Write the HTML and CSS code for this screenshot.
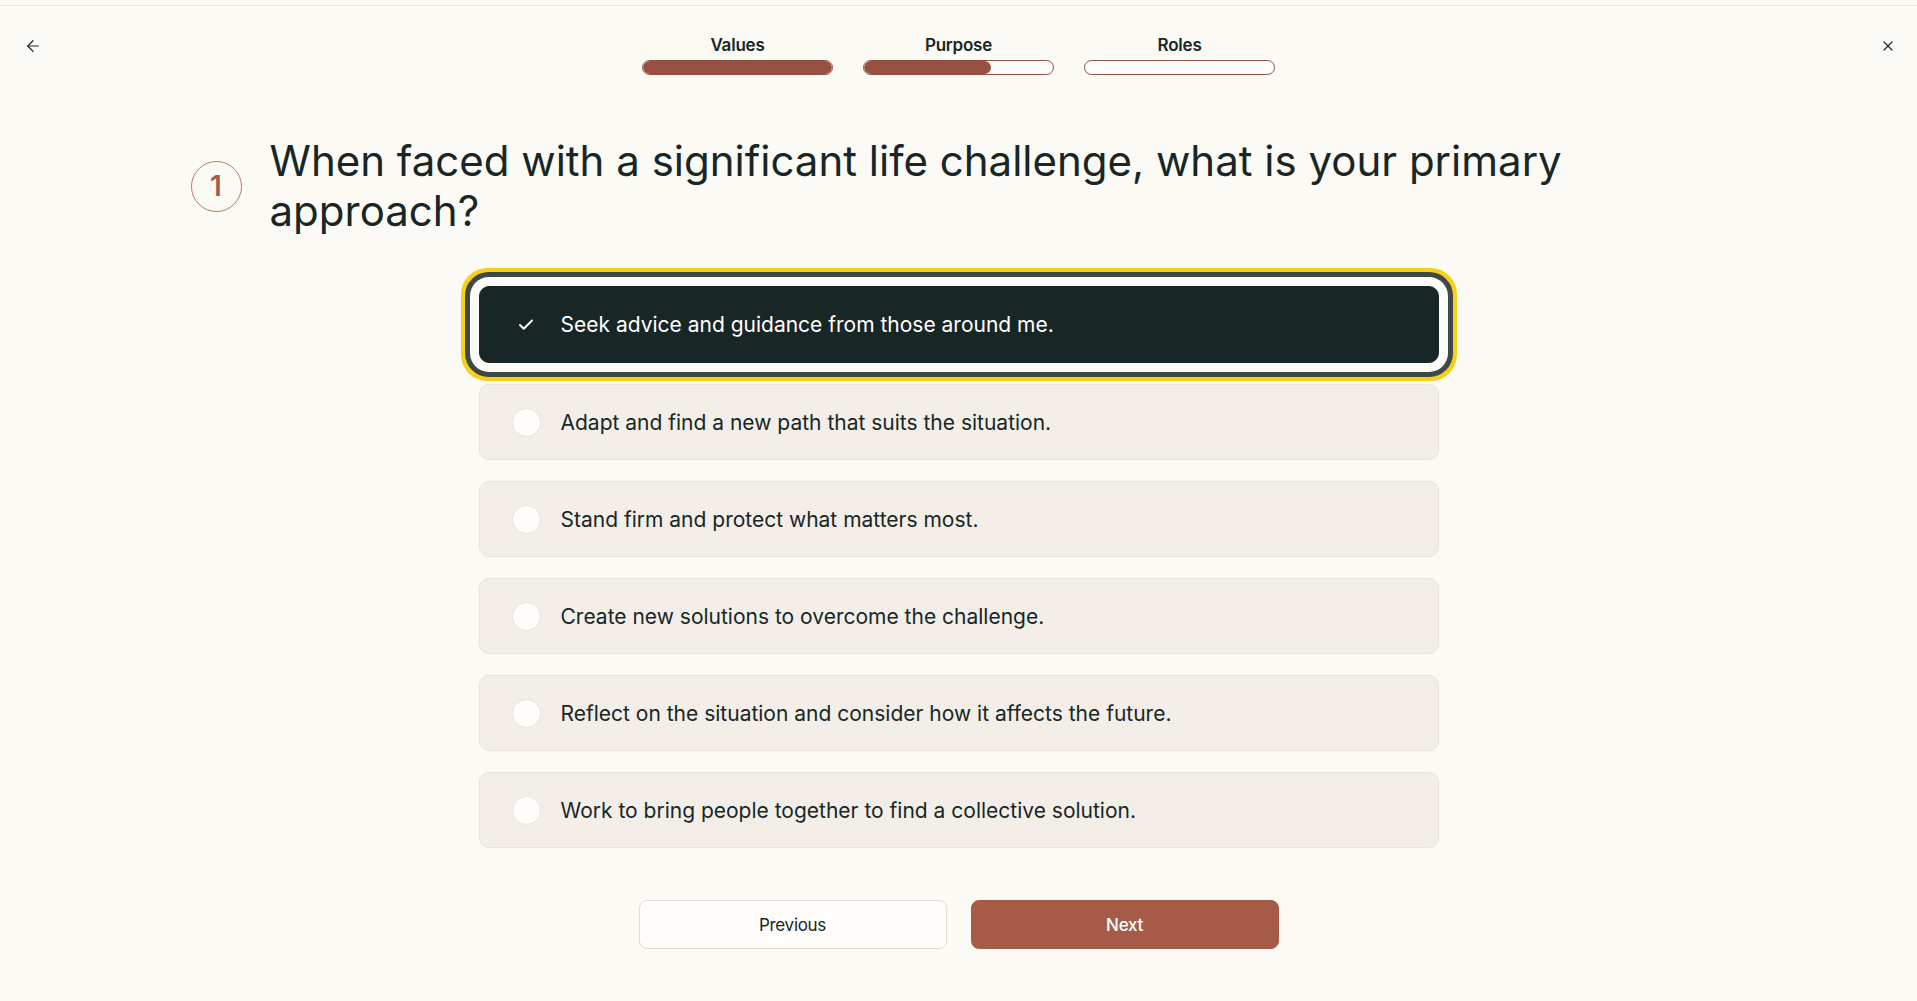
FILE: index.html
```html
<!DOCTYPE html>
<html lang="en">
<head>
  <meta charset="UTF-8">
  <meta name="viewport" content="width=device-width, initial-scale=1.0">
  <title>Archetype Quiz</title>
  <link rel="stylesheet" href="styles.css">
</head>
<body>
<div class="page">
  <header class="topbar">
    <button class="icon-btn" aria-label="Back">
      <svg width="18" height="18" viewBox="0 0 24 24" fill="none" stroke="currentColor" stroke-width="1.6" stroke-linecap="round" stroke-linejoin="round"><path d="M19 12H5"/><path d="M12 19l-7-7 7-7"/></svg>
    </button>

    <div class="steps">
      <div class="step">
        <span class="step-label">Values</span>
        <div class="step-bar"><div class="step-fill" style="width:100%"></div></div>
      </div>
      <div class="step">
        <span class="step-label">Purpose</span>
        <div class="step-bar"><div class="step-fill" style="width:67%"></div></div>
      </div>
      <div class="step">
        <span class="step-label">Roles</span>
        <div class="step-bar"><div class="step-fill" style="width:0%"></div></div>
      </div>
    </div>

    <button class="icon-btn" aria-label="Close">
      <svg width="16" height="16" viewBox="0 0 24 24" fill="none" stroke="currentColor" stroke-width="1.8" stroke-linecap="round" stroke-linejoin="round"><path d="M18 6L6 18"/><path d="M6 6l12 12"/></svg>
    </button>
  </header>

  <main class="quiz">
    <div class="question">
      <div class="q-number">1</div>
      <h1>When faced with a significant life challenge, what is your primary approach?</h1>
    </div>

    <div class="options">
      <button class="option selected">
        <span class="mark">
          <svg width="18" height="18" viewBox="0 0 24 24" fill="none" stroke="currentColor" stroke-width="2.6" stroke-linecap="round" stroke-linejoin="round"><path d="M20 6L9 17l-5-5"/></svg>
        </span>
        <span class="option-text">Seek advice and guidance from those around me.</span>
      </button>
      <button class="option">
        <span class="radio"></span>
        <span class="option-text">Adapt and find a new path that suits the situation.</span>
      </button>
      <button class="option">
        <span class="radio"></span>
        <span class="option-text">Stand firm and protect what matters most.</span>
      </button>
      <button class="option">
        <span class="radio"></span>
        <span class="option-text">Create new solutions to overcome the challenge.</span>
      </button>
      <button class="option">
        <span class="radio"></span>
        <span class="option-text">Reflect on the situation and consider how it affects the future.</span>
      </button>
      <button class="option">
        <span class="radio"></span>
        <span class="option-text">Work to bring people together to find a collective solution.</span>
      </button>
    </div>

    <div class="nav">
      <button class="btn btn-outline">Previous</button>
      <button class="btn btn-primary">Next</button>
    </div>
  </main>
</div>
</body>
</html>
```

FILE: styles.css
```css
body {
  margin: 0;
  background: #fbfaf5;
  color: #182626;
  font-family: "Inter", "Noto Sans", sans-serif;
}

button {
  font-family: inherit;
  cursor: pointer;
}

.page {
  min-height: 100vh;
  padding-top: 5px;
  box-sizing: border-box;
}

/* top bar */
.topbar {
  border-top: 1px solid #f6e2e1;
  display: flex;
  justify-content: space-between;
  align-items: flex-start;
  padding: 0 20px 0 24px;
  height: 70px;
}

.icon-btn {
  background: none;
  border: none;
  padding: 0;
  margin-top: 31px;
  color: #1f2a2a;
  width: 18px;
  height: 18px;
  display: flex;
  align-items: center;
  justify-content: center;
}

.steps {
  display: flex;
  gap: 30px;
  padding-top: 29px;
  margin-left: -4px;
}

.step {
  width: 191px;
  display: flex;
  flex-direction: column;
  align-items: center;
  gap: 5px;
}

.step-label {
  font-size: 17px;
  font-weight: 600;
  line-height: 20px;
  letter-spacing: -0.2px;
}

.step-bar {
  width: 100%;
  height: 15px;
  box-sizing: border-box;
  border: 1.5px solid #964f40;
  border-radius: 999px;
  background: #fffdf9;
  overflow: hidden;
}

.step-fill {
  height: 100%;
  background: #964f40;
  border-radius: 999px;
}

/* question */
.quiz {
  max-width: 1536px;
  margin: 0 auto;
  padding-top: 60px;
}

.question {
  display: flex;
  align-items: center;
  gap: 28px;
}

.q-number {
  flex: none;
  width: 51px;
  height: 51px;
  box-sizing: border-box;
  border: 1.5px solid #b87a64;
  border-radius: 50%;
  display: flex;
  align-items: center;
  justify-content: center;
  color: #a65d48;
  font-size: 28px;
  font-weight: 600;
}

.question h1 {
  margin: 0;
  font-size: 42px;
  font-weight: 400;
  line-height: 50px;
  letter-spacing: 0;
}

/* options */
.options {
  max-width: 960px;
  margin: 50px auto 0;
  display: flex;
  flex-direction: column;
  gap: 21px;
}

.option {
  display: flex;
  align-items: center;
  gap: 20px;
  height: 76px;
  padding: 0 32px;
  background: #f3efe8;
  border: 1px solid #e9e3d9;
  border-radius: 10px;
  text-align: left;
  color: #182626;
  font-size: 21px;
  letter-spacing: 0;
}

.option.selected {
  background: #182626;
  border-color: #182626;
  color: #fff;
  height: 77px;
  box-shadow: 0 0 0 9px #fdfcf8, 0 0 0 14px #3d4947, 0 0 0 18px #f8d01a;
}

.radio, .mark {
  flex: none;
  width: 29px;
  height: 29px;
  box-sizing: border-box;
  border-radius: 50%;
  display: flex;
  align-items: center;
  justify-content: center;
}

.radio {
  background: #fffdf9;
  border: 1px solid #ebe4da;
}

/* buttons */
.nav {
  max-width: 640px;
  margin: 52px auto 0;
  display: flex;
  gap: 24px;
}

.btn {
  flex: 1;
  height: 49px;
  border-radius: 8px;
  font-size: 17px;
  letter-spacing: -0.3px;
}

.btn-outline {
  background: #fffdf9;
  border: 1px solid #e4dcd2;
  color: #182626;
}

.btn-primary {
  background: #a65b49;
  border: 1px solid #a65b49;
  color: #fff;
  font-weight: 500;
}
```
